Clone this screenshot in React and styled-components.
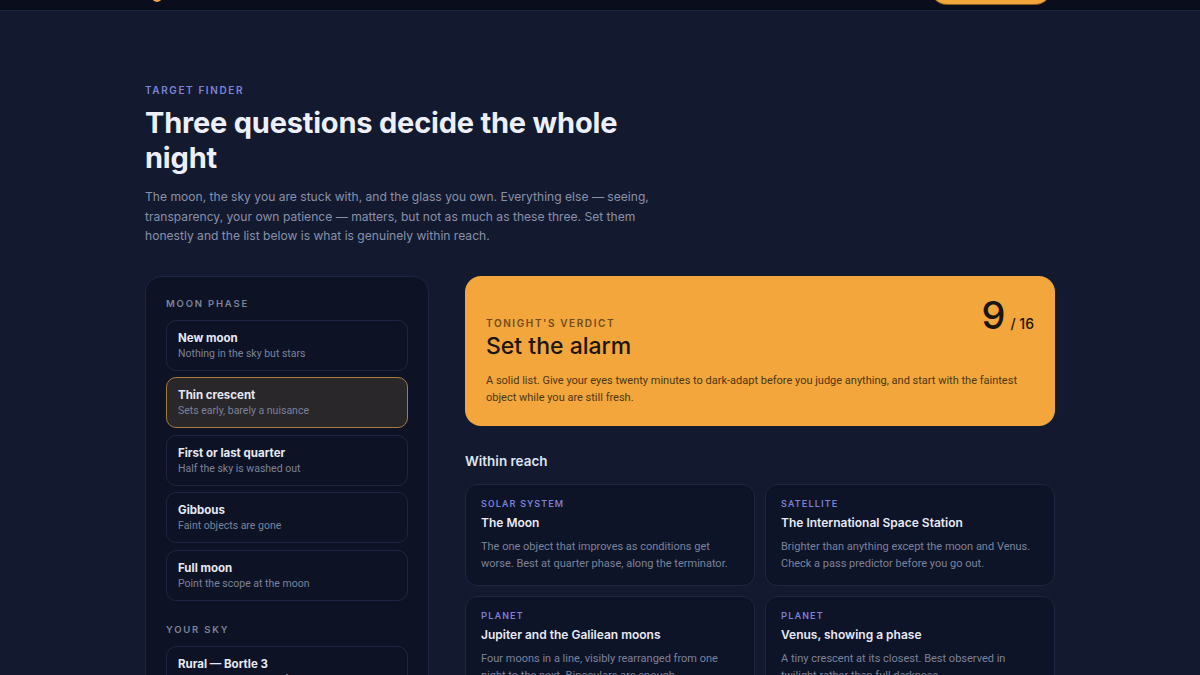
import React from "react";
import styled, { createGlobalStyle } from "styled-components";

const Global = createGlobalStyle`
  html, body { margin: 0; padding: 0; background: #131a30; }
  body { font-family: Inter, "Noto Sans", sans-serif; color: #e6e9f5; -webkit-font-smoothing: antialiased; }
  * { box-sizing: border-box; }
`;

const Header = styled.header`
  height: 11px;
  overflow: hidden;
  background: #0a0e1c;
  border-bottom: 1px solid #1c2440;
`;

const HeaderInner = styled.div`
  width: 910px;
  margin: 0 auto;
  display: flex;
  justify-content: space-between;
  align-items: flex-start;
`;

const Logo = styled.div`
  width: 10px;
  height: 10px;
  margin-top: -8px;
  margin-left: 7px;
  border-radius: 50%;
  background: #f2a63b;
`;

const HeaderButton = styled.div`
  width: 122px;
  height: 34px;
  margin-top: -30px;
  margin-right: 3px;
  border-radius: 17px;
  background: #f2a63b;
  box-shadow: 0 1px 0 #8a5a1a;
`;

const Main = styled.main`
  width: 910px;
  margin: 0 auto;
  padding-top: 72px;
`;

const Eyebrow = styled.div`
  font-size: 10px;
  font-weight: 600;
  letter-spacing: 1.6px;
  text-transform: uppercase;
  color: ${(p) => p.$color || "#7f83d6"};
  line-height: 14px;
`;

const Title = styled.h1`
  margin: 8px 0 0;
  max-width: 520px;
  font-size: 29px;
  line-height: 35px;
  font-weight: 700;
  letter-spacing: -0.2px;
  color: #edf0fa;
`;

const Lead = styled.p`
  margin: 12px 0 0;
  max-width: 520px;
  font-size: 12.1px;
  line-height: 19.5px;
  color: #8990a8;
`;

const Layout = styled.div`
  margin-top: 30px;
  display: grid;
  grid-template-columns: 284px 1fr;
  gap: 36px;
  align-items: start;
`;

const Sidebar = styled.aside`
  background: #0d1325;
  border: 1px solid #1d2540;
  border-radius: 16px;
  padding: 20px 20px 24px;
`;

const Group = styled.div`
  & + & { margin-top: 22px; }
`;

const GroupLabel = styled.div`
  font-size: 9.5px;
  font-weight: 600;
  letter-spacing: 1.8px;
  text-transform: uppercase;
  color: #7c8399;
  line-height: 14px;
  margin-bottom: 9px;
`;

const Options = styled.div`
  display: flex;
  flex-direction: column;
  gap: 6.5px;
`;

const Option = styled.div`
  border-radius: 10px;
  padding: 9px 11px;
  border: 1px solid ${(p) => (p.$active ? "#a67b3e" : "#1d2541")};
  background: ${(p) => (p.$active ? "#29272a" : "transparent")};
`;

const OptionTitle = styled.div`
  font-size: 11.5px;
  font-weight: 700;
  line-height: 16px;
  color: #e6e9f5;
`;

const OptionSub = styled.div`
  font-family: Roboto, "Noto Sans", sans-serif;
  font-size: 10.5px;
  line-height: 15px;
  color: #7b829a;
`;

const Right = styled.section`
  display: flex;
  flex-direction: column;
`;

const Verdict = styled.div`
  background: #f2a63b;
  border-radius: 16px;
  padding: 20px 21px 20px;
  color: #1b1408;
`;

const VerdictHead = styled.div`
  display: flex;
  justify-content: space-between;
  align-items: flex-start;
`;

const VerdictLeft = styled.div`
  padding-top: 20px;
`;

const VerdictTitle = styled.div`
  margin-top: 2px;
  font-size: 23px;
  line-height: 28px;
  font-weight: 500;
  color: #1b1408;
`;

const Score = styled.div`
  display: flex;
  align-items: baseline;
  gap: 5px;
  line-height: 1;
`;

const ScoreBig = styled.span`
  font-size: 38px;
  font-weight: 500;
`;

const ScoreSmall = styled.span`
  font-size: 14px;
  font-weight: 500;
`;

const VerdictText = styled.p`
  margin: 12px 0 0;
  font-family: Roboto, "Noto Sans", sans-serif;
  font-size: 11px;
  line-height: 17px;
  color: #4d3614;
`;

const SectionTitle = styled.h2`
  margin: 26px 0 0;
  font-size: 13.5px;
  line-height: 18px;
  font-weight: 600;
  color: #dfe3f0;
`;

const Grid = styled.div`
  margin-top: 14px;
  display: grid;
  grid-template-columns: 1fr 1fr;
  gap: 10px;
`;

const Card = styled.div`
  background: #0e1427;
  border: 1px solid #1e2642;
  border-radius: 12px;
  padding: 12px 15px 13px;
  min-height: 100px;
`;

const CardTag = styled.div`
  font-family: Roboto, "Noto Sans", sans-serif;
  font-size: 9.5px;
  font-weight: 500;
  letter-spacing: 1.2px;
  text-transform: uppercase;
  color: #7c80d8;
  line-height: 14px;
`;

const CardTitle = styled.div`
  margin-top: 4px;
  font-size: 12px;
  font-weight: 600;
  line-height: 16px;
  color: #e7eaf6;
`;

const CardText = styled.p`
  margin: 7px 0 0;
  font-family: Roboto, "Noto Sans", sans-serif;
  font-size: 11px;
  line-height: 17px;
  color: #7b829a;
`;

const moon = [
  ["New moon", "Nothing in the sky but stars"],
  ["Thin crescent", "Sets early, barely a nuisance", true],
  ["First or last quarter", "Half the sky is washed out"],
  ["Gibbous", "Faint objects are gone"],
  ["Full moon", "Point the scope at the moon"],
];

const sky = [
  ["Rural — Bortle 3", "The Milky Way casts a faint shadow"],
  ["Suburban — Bortle 5", "Milky Way only overhead"],
  ["City — Bortle 8", "A handful of bright stars"],
];

const targets = [
  ["Solar system", "The Moon", "The one object that improves as conditions get worse. Best at quarter phase, along the terminator."],
  ["Satellite", "The International Space Station", "Brighter than anything except the moon and Venus. Check a pass predictor before you go out."],
  ["Planet", "Jupiter and the Galilean moons", "Four moons in a line, visibly rearranged from one night to the next. Binoculars are enough."],
  ["Planet", "Venus, showing a phase", "A tiny crescent at its closest. Best observed in twilight rather than full darkness."],
];

export default function App() {
  return (
    <>
      <Global />
      <Header>
        <HeaderInner>
          <Logo />
          <HeaderButton />
        </HeaderInner>
      </Header>
      <Main>
        <Eyebrow>Target finder</Eyebrow>
        <Title>Three questions decide the whole night</Title>
        <Lead>
          The moon, the sky you are stuck with, and the glass you own. Everything else — seeing,
          transparency, your own patience — matters, but not as much as these three. Set them
          honestly and the list below is what is genuinely within reach.
        </Lead>
        <Layout>
          <Sidebar>
            <Group>
              <GroupLabel>Moon phase</GroupLabel>
              <Options>
                {moon.map(([t, s, a]) => (
                  <Option key={t} $active={a}>
                    <OptionTitle>{t}</OptionTitle>
                    <OptionSub>{s}</OptionSub>
                  </Option>
                ))}
              </Options>
            </Group>
            <Group>
              <GroupLabel>Your sky</GroupLabel>
              <Options>
                {sky.map(([t, s]) => (
                  <Option key={t}>
                    <OptionTitle>{t}</OptionTitle>
                    <OptionSub>{s}</OptionSub>
                  </Option>
                ))}
              </Options>
            </Group>
          </Sidebar>
          <Right>
            <Verdict>
              <VerdictHead>
                <VerdictLeft>
                  <Eyebrow $color="#6e4c1c">Tonight's verdict</Eyebrow>
                  <VerdictTitle>Set the alarm</VerdictTitle>
                </VerdictLeft>
                <Score>
                  <ScoreBig>9</ScoreBig>
                  <ScoreSmall>/ 16</ScoreSmall>
                </Score>
              </VerdictHead>
              <VerdictText>
                A solid list. Give your eyes twenty minutes to dark-adapt before you judge anything, and start
                with the faintest object while you are still fresh.
              </VerdictText>
            </Verdict>
            <SectionTitle>Within reach</SectionTitle>
            <Grid>
              {targets.map(([tag, t, d]) => (
                <Card key={t}>
                  <CardTag>{tag}</CardTag>
                  <CardTitle>{t}</CardTitle>
                  <CardText>{d}</CardText>
                </Card>
              ))}
            </Grid>
          </Right>
        </Layout>
      </Main>
    </>
  );
}
